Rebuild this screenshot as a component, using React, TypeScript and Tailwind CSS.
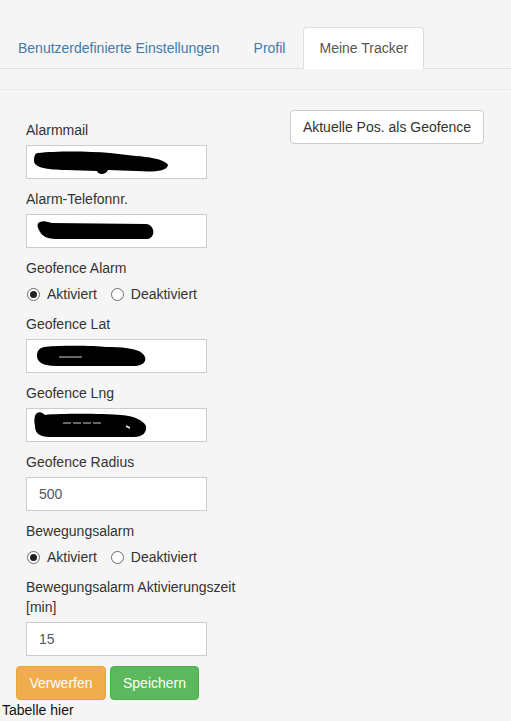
import React from "react";

const font = { fontFamily: '"Liberation Sans", Arial, Helvetica, sans-serif' };

function Label({ children }: { children: React.ReactNode }) {
  return <div className="mb-[5px] text-[14px] leading-5 text-[#333]">{children}</div>;
}

function Input({ value, blob }: { value?: string; blob?: React.ReactNode }) {
  return (
    <div className="relative mb-[10px] h-[34px] w-[181px] border border-[#cccccc] bg-white px-[12px] text-[14px] leading-[32px] text-[#555]">
      {value}
      {blob}
    </div>
  );
}

function Blob({ children }: { children: React.ReactNode }) {
  return (
    <svg className="absolute left-[-1px] top-[-1px]" width="181" height="34" viewBox="0 0 181 34">
      {children}
    </svg>
  );
}

function Radio({ checked, label }: { checked?: boolean; label: string }) {
  return (
    <span className="flex items-center">
      <span className="flex h-[13px] w-[13px] items-center justify-center rounded-full border border-[#6b6b6b] bg-white">
        {checked && <span className="h-[7px] w-[7px] rounded-full bg-[#222]" />}
      </span>
      <span className="ml-[7px] text-[14px] leading-5 text-[#333]">{label}</span>
    </span>
  );
}

function RadioRow() {
  return (
    <div className="mb-[10px] mt-[6px] flex h-5 items-center gap-[14px] pl-[1px]">
      <Radio checked label="Aktiviert" />
      <Radio label="Deaktiviert" />
    </div>
  );
}

export default function App() {
  return (
    <div className="min-h-[721px] w-full bg-[#f5f5f5]" style={font}>
      <div className="pt-[27px]">
        <ul className="flex border-b border-[#dddddd] pl-[2px] text-[14px] leading-5">
          <li className="-mb-px mr-[2px]">
            <span className="block border border-transparent px-[15px] py-[10px] text-[#4479a8]">
              Benutzerdefinierte Einstellungen
            </span>
          </li>
          <li className="-mb-px mr-[2px]">
            <span className="block border border-transparent px-[15px] py-[10px] text-[#4479a8]">Profil</span>
          </li>
          <li className="-mb-px">
            <span className="block rounded-t-[4px] border border-[#dddddd] border-b-transparent bg-white px-[15px] py-[10px] text-[#555]">
              Meine Tracker
            </span>
          </li>
        </ul>
      </div>
      <div className="mt-[20px] border-t border-[#e8e8e8]">
        <div className="flex">
          <div className="w-[230px] pl-[26px] pt-[30px] box-content">
            <Label>Alarmmail</Label>
            <Input
              blob={
                <Blob>
                  <text x="112" y="19" fontSize="12" fill="#aaa" style={font}>l.o</text>
                  <path
                    d="M12 8 C30 6 60 6 84 8 L110 11 C125 12 140 15 142 20 C141 27 125 27 110 26 L82 25 C80 30 72 30 71 26 L40 25 C20 25 8 22 8 16 C8 11 9 8 12 8 Z"
                    fill="#000"
                  />
                </Blob>
              }
            />
            <Label>Alarm-Telefonnr.</Label>
            <Input
              blob={
                <Blob>
                  <path
                    d="M14 8 C18 6 22 8 26 9 L120 10 C129 11 130 23 122 25 L30 25 C20 25 15 21 13 16 C11 12 11 9 14 8 Z"
                    fill="#000"
                  />
                </Blob>
              }
            />
            <Label>Geofence Alarm</Label>
            <RadioRow />
            <Label>Geofence Lat</Label>
            <Input
              blob={
                <Blob>
                  <path
                    d="M18 8 C40 6 70 7 80 8 C95 8 110 9 116 14 C122 19 120 26 110 27 L30 27 C17 27 11 23 11 17 C11 11 14 9 18 8 Z"
                    fill="#000"
                  />
                  <path d="M33 18 L56 18" stroke="#ccc" strokeWidth="1" />
                </Blob>
              }
            />
            <Label>Geofence Lng</Label>
            <Input
              blob={
                <Blob>
                  <path
                    d="M11 5 C14 3 17 5 19 7 C40 5 80 6 95 7 C108 8 117 12 120 18 C121 25 116 29 108 29 L24 29 C13 29 9 25 9 18 C8 13 8 7 11 5 Z"
                    fill="#000"
                  />
                  <path d="M37 15 L76 15" stroke="#ccc" strokeWidth="1" strokeDasharray="8 2" />
                  <path d="M100 18 L104 20" stroke="#eee" strokeWidth="1.5" />
                </Blob>
              }
            />
            <Label>Geofence Radius</Label>
            <Input value="500" />
            <Label>Bewegungsalarm</Label>
            <RadioRow />
            <Label>Bewegungsalarm Aktivierungszeit [min]</Label>
            <Input value="15" />
          </div>
          <div className="ml-auto mr-[27px] mt-[20px]">
            <button className="h-[34px] rounded-[4px] border border-[#cccccc] bg-white px-[12px] text-[14px] leading-5 text-[#333]">
              Aktuelle Pos. als Geofence
            </button>
          </div>
        </div>
        <div className="flex gap-[4px] pl-[16px]">
          <button className="h-[34px] w-[90px] rounded-[4px] border border-[#eea236] bg-[#f0ad4e] text-[14px] leading-5 text-white">
            Verwerfen
          </button>
          <button className="h-[34px] w-[89px] rounded-[4px] border border-[#4cae4c] bg-[#5cb85c] text-[14px] leading-5 text-white">
            Speichern
          </button>
        </div>
        <div className="pl-[2px] text-[14px] leading-5 text-[#111]">Tabelle hier</div>
      </div>
    </div>
  );
}
